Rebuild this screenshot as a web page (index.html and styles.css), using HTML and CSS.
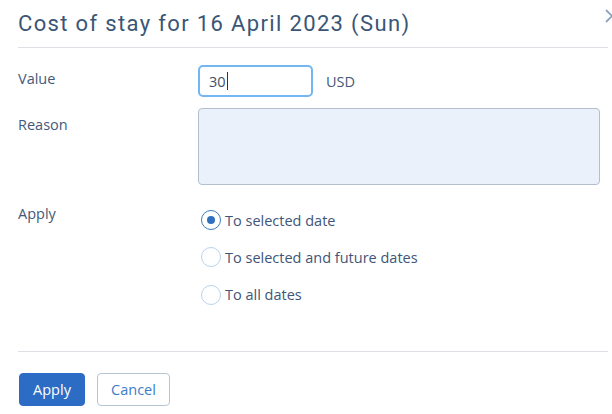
FILE: index.html
```html
<!DOCTYPE html>
<html>
<head>
<meta charset="utf-8">
<link rel="stylesheet" href="styles.css">
</head>
<body>
<div class="dialog">
  <div class="header">
    <h1 class="title">Cost of stay for 16 April 2023 (Sun)</h1>
    <svg class="close" width="14" height="14" viewBox="0 0 14 14"><path d="M1 1 L13 13 M13 1 L1 13" stroke="#8ea3bd" stroke-width="1.8" fill="none"/></svg>
  </div>
  <div class="form">
    <div class="label label-value">Value</div>
    <div class="field field-value">
      <div class="input">30<span class="caret"></span></div>
      <span class="unit">USD</span>
    </div>
    <div class="label label-reason">Reason</div>
    <div class="field field-reason">
      <div class="textarea"></div>
    </div>
    <div class="label label-apply">Apply</div>
    <div class="field field-apply">
      <div class="radio-row"><span class="radio checked"></span><span>To selected date</span></div>
      <div class="radio-row"><span class="radio"></span><span>To selected and future dates</span></div>
      <div class="radio-row"><span class="radio"></span><span>To all dates</span></div>
    </div>
  </div>
  <div class="footer">
    <button class="btn btn-primary">Apply</button>
    <button class="btn btn-secondary">Cancel</button>
  </div>
</div>
</body>
</html>
```

FILE: styles.css
```css
html, body {
  margin: 0;
  padding: 0;
  background: #ffffff;
  overflow: hidden;
}
body {
  font-family: "Open Sans", "Noto Sans", sans-serif;
  font-size: 14.5px;
  color: #44597a;
}
.dialog {
  width: 590px;
  padding-left: 18px;
}
.header {
  position: relative;
  padding-top: 10px;
  padding-bottom: 9px;
  border-bottom: 1px solid #dcdfe4;
}
.title {
  margin: 0;
  font-family: Roboto, "Liberation Sans", sans-serif;
  font-weight: 400;
  font-size: 22px;
  line-height: 28px;
  letter-spacing: 1.35px;
  color: #3a5676;
}
.close {
  position: absolute;
  top: 9px;
  right: -11px;
}
.form {
  display: grid;
  grid-template-columns: 180px 1fr;
  padding-top: 17px;
}
.label {
  line-height: 20px;
}
.label-value { padding-top: 4px; }
.label-reason { padding-top: 7px; margin-top: 11px; }
.label-apply { padding-top: 1px; margin-top: 18px; }
.field-value {
  display: flex;
  align-items: center;
  gap: 13px;
}
.input {
  box-sizing: border-box;
  width: 115px;
  height: 32px;
  border: 2px solid #72b6f2;
  border-radius: 5px;
  padding-left: 9px;
  display: flex;
  align-items: center;
  color: #3f4f63;
}
.caret {
  display: inline-block;
  width: 1px;
  height: 18px;
  background: #333;
  margin-left: 1px;
}
.unit {
  color: #44597a;
  padding-top: 1px;
}
.field-reason {
  margin-top: 11px;
}
.textarea {
  box-sizing: border-box;
  width: 402px;
  height: 77px;
  background: #eaf1fa;
  border: 1px solid #b3bfcd;
  border-radius: 4px;
}
.field-apply {
  margin-top: 25px;
  display: flex;
  flex-direction: column;
  gap: 17.3px;
}
.radio-row {
  display: flex;
  align-items: center;
  height: 20px;
  gap: 4px;
  color: #3f5577;
}
.radio {
  box-sizing: border-box;
  width: 20px;
  height: 20px;
  border-radius: 50%;
  border: 1.5px solid #b9d3ee;
  margin-left: 3px;
  position: relative;
}
.radio.checked {
  border-color: #3a7bc2;
}
.radio.checked::after {
  content: "";
  position: absolute;
  left: 4.5px;
  top: 4.5px;
  width: 8px;
  height: 8px;
  border-radius: 50%;
  background: #2f71bf;
}
.footer {
  margin-top: 46.4px;
  border-top: 1px solid #dcdfe4;
  padding-top: 21px;
  display: flex;
  gap: 12px;
  padding-left: 1px;
}
.btn {
  box-sizing: border-box;
  height: 33px;
  border-radius: 4px;
  font-family: "Open Sans", "Noto Sans", sans-serif;
  font-size: 14.5px;
  padding: 0;
  cursor: pointer;
}
.btn-primary {
  width: 66px;
  background: #2c6cc4;
  border: 1px solid #2c6cc4;
  color: #ffffff;
}
.btn-secondary {
  width: 73px;
  background: #ffffff;
  border: 1px solid #b8c5d4;
  color: #3d7cc7;
}
```
